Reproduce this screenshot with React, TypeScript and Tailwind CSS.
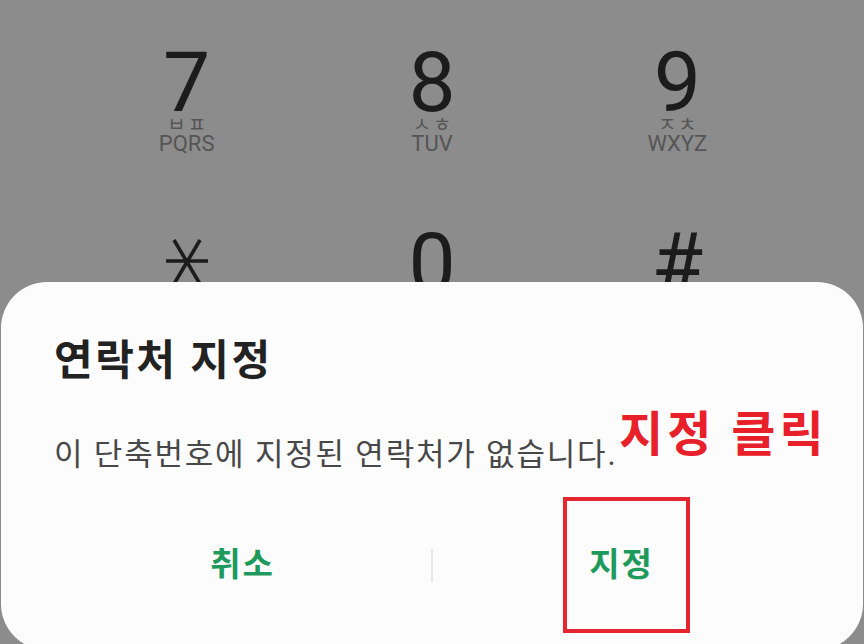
const keys = [
  { d: '7', ko: 'ㅂㅍ', en: 'PQRS' },
  { d: '8', ko: 'ㅅㅎ', en: 'TUV' },
  { d: '9', ko: 'ㅈㅊ', en: 'WXYZ' },
];

function Star() {
  return (
    <svg width="46" height="46" viewBox="0 0 46 46" fill="none" stroke="#1c1c1c" strokeWidth="3.6">
      <line x1="2" y1="22" x2="44" y2="22" />
      <line x1="10" y1="1" x2="36" y2="45" />
      <line x1="36" y1="1" x2="10" y2="45" />
    </svg>
  );
}

export default function App() {
  const font = { fontFamily: 'Roboto, "Noto Sans CJK KR", sans-serif' };
  return (
    <div className="relative h-[644px] w-[864px] overflow-hidden bg-[#8c8c8c]" style={font}>
      {/* keypad */}
      <div className="grid grid-cols-3 pt-[47px] px-[64px]">
        {keys.map((k) => (
          <div key={k.d} className="flex flex-col items-center">
            <div className="text-[84px] leading-[72px] text-[#1c1c1c]">{k.d}</div>
            <div className="mt-[1px] text-[20px] leading-[11px] tracking-[2px] pl-[2px] text-[#555]">{k.ko}</div>
            <div className="mt-[2px] text-[22px] leading-[22px] text-[#555]">{k.en}</div>
          </div>
        ))}
      </div>
      <div className="grid grid-cols-3 mt-[67px] px-[64px]">
        <div className="flex justify-center pt-[17px]">
          <Star />
        </div>
        <div className="flex justify-center text-[84px] leading-[84px] text-[#1c1c1c]">0</div>
        <div className="flex justify-center text-[84px] leading-[84px] text-[#1c1c1c]">#</div>
      </div>

      {/* dialog */}
      <div className="absolute left-[1px] right-[1px] top-[282px] h-[368px] rounded-[46px] bg-[#fcfcfc] px-[53px] pt-[55px]">
        <div className="text-[42px] leading-[48px] font-bold tracking-[2.5px] text-[#222]">연락처 지정</div>
        <div className="mt-[50px] text-[31px] leading-[40px] tracking-[1.8px] text-[#484848]">
          이 단축번호에 지정된 연락처가 없습니다.
        </div>
        <div className="mt-[55px] flex h-[70px] items-center">
          <div className="flex-1 text-center text-[33px] font-bold tracking-[2px] text-[#1e9a5c]">취소</div>
          <div className="h-[33px] w-[2px] bg-[#e6e6e6]" />
          <div className="flex-1 text-center text-[33px] font-bold tracking-[2px] text-[#1e9a5c]">지정</div>
        </div>
      </div>

      {/* annotation */}
      <div className="absolute left-[619px] top-[405px] text-[48px] leading-[60px] font-bold tracking-[4px] text-[#e8202a]">
        지정 클릭
      </div>
      <div className="absolute left-[563px] top-[497px] h-[136px] w-[127px] border-[4px] border-[#e52530]" />
    </div>
  );
}
